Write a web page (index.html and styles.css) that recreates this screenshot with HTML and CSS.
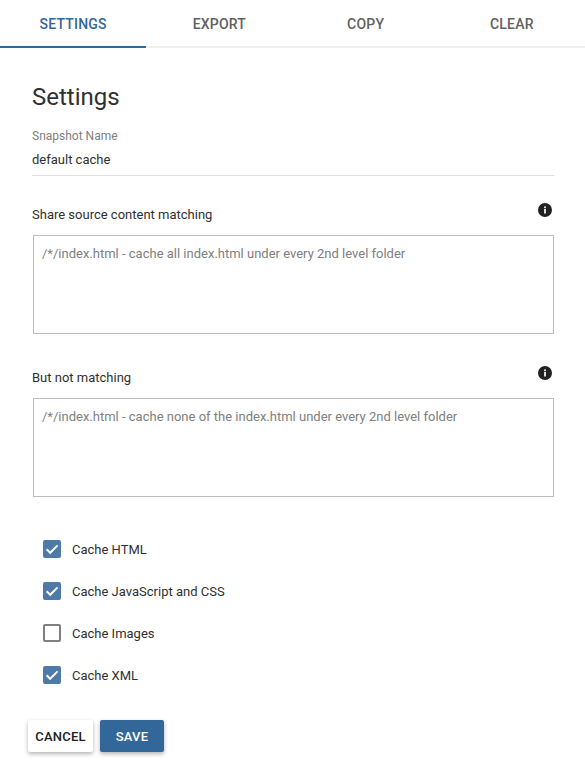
FILE: index.html
```
<!DOCTYPE html>
<html lang="en">
<head>
<meta charset="utf-8">
<title>Settings</title>
<link rel="stylesheet" href="styles.css">
</head>
<body>
<nav class="tabs">
  <div class="tab active">SETTINGS</div>
  <div class="tab">EXPORT</div>
  <div class="tab">COPY</div>
  <div class="tab">CLEAR</div>
</nav>
<main class="content">
  <h1 class="title">Settings</h1>
  <div class="name-field">
    <label class="name-label">Snapshot Name</label>
    <div class="name-value">default cache</div>
  </div>
  <section class="match">
    <div class="match-head">
      <span>Share source content matching</span>
      <svg class="info" viewBox="0 0 14 14"><circle cx="7" cy="7" r="7" fill="#212121"/><rect x="6" y="6" width="2" height="4.5" fill="#ddd"/><rect x="6" y="3.4" width="2" height="1.8" fill="#ddd"/></svg>
    </div>
    <div class="area">/*/index.html - cache all index.html under every 2nd level folder</div>
  </section>
  <section class="match second">
    <div class="match-head">
      <span>But not matching</span>
      <svg class="info" viewBox="0 0 14 14"><circle cx="7" cy="7" r="7" fill="#212121"/><rect x="6" y="6" width="2" height="4.5" fill="#ddd"/><rect x="6" y="3.4" width="2" height="1.8" fill="#ddd"/></svg>
    </div>
    <div class="area">/*/index.html - cache none of the index.html under every 2nd level folder</div>
  </section>
  <ul class="checks">
    <li class="check"><span class="box on"><svg viewBox="0 0 18 18"><path d="M3.6 9.2 7.2 12.8 14.6 5.4" fill="none" stroke="#fff" stroke-width="2"/></svg></span>Cache HTML</li>
    <li class="check"><span class="box on"><svg viewBox="0 0 18 18"><path d="M3.6 9.2 7.2 12.8 14.6 5.4" fill="none" stroke="#fff" stroke-width="2"/></svg></span>Cache JavaScript and CSS</li>
    <li class="check"><span class="box"></span>Cache Images</li>
    <li class="check"><span class="box on"><svg viewBox="0 0 18 18"><path d="M3.6 9.2 7.2 12.8 14.6 5.4" fill="none" stroke="#fff" stroke-width="2"/></svg></span>Cache XML</li>
  </ul>
  <div class="actions">
    <button class="btn">CANCEL</button>
    <button class="btn primary">SAVE</button>
  </div>
</main>
</body>
</html>
```
FILE: styles.css
```
* { box-sizing: border-box; }
html, body { margin: 0; padding: 0; }
body {
  width: 585px;
  height: 776px;
  overflow: hidden;
  background: #fff;
  font-family: Roboto, "Liberation Sans", sans-serif;
  color: #303030;
}
.tabs {
  display: flex;
  height: 48px;
  border-bottom: 2px solid #f0f0f0;
}
.tab {
  flex: 1;
  height: 48px;
  padding-top: 15px;
  text-align: center;
  font-size: 14px;
  line-height: 18px;
  font-weight: 500;
  letter-spacing: 0.2px;
  color: #616161;
}
.tab.active {
  color: #336699;
  border-bottom: 2px solid #336699;
}
.content { padding: 0 31px 0 32px; }
.title {
  margin: 33px 0 0;
  font-size: 24px;
  line-height: 32px;
  font-weight: 400;
}
.name-field {
  margin-top: 15px;
  height: 48px;
  border-bottom: 1px solid #e0e0e0;
}
.name-label {
  display: block;
  font-size: 12px;
  line-height: 16px;
  color: #808080;
}
.name-value {
  margin-top: 7px;
  font-size: 13px;
  line-height: 18px;
}
.match { margin-top: 30px; }
.match.second { margin-top: 35px; }
.match-head {
  display: flex;
  justify-content: space-between;
  font-size: 13px;
  line-height: 18px;
  height: 29px;
}
.info { width: 14px; height: 14px; margin-right: 2px; margin-top: -3px; }
.area {
  margin-left: 1px;
  height: 99px;
  border: 1px solid #bdbdbd;
  padding: 9px 8px;
  font-size: 13px;
  line-height: 18px;
  color: #808080;
}
.checks { list-style: none; margin: 31px 0 0; padding: 0 0 0 11px; }
.check {
  display: flex;
  align-items: center;
  height: 42px;
  font-size: 13px;
}
.box {
  width: 18px;
  height: 18px;
  margin-right: 11px;
  border: 2px solid #808080;
  border-radius: 2px;
}
.box.on { border: 0; background: #4d7aa8; }
.box svg { display: block; width: 18px; height: 18px; }
.actions { display: flex; gap: 7px; margin: 24px 0 0 -4px; }
.btn {
  height: 32px;
  padding: 0 7px;
  width: 65px;
  border: 0;
  border-radius: 2px;
  background: #fff;
  color: #212121;
  font-family: inherit;
  font-size: 13px;
  font-weight: 500;
  letter-spacing: 0.2px;
  box-shadow: 0 2px 4px rgba(0,0,0,.3);
}
.btn.primary { background: #336699; color: #fff; width: 64px; }
```
